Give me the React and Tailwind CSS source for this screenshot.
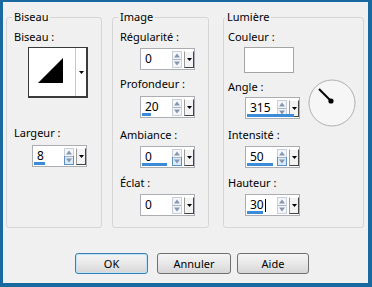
const SpinArrows = ({ hot }) => (
  <svg width="10" height="17" viewBox="0 0 10 17" className="shrink-0">
    <rect x="0.5" y="0.5" width="9" height="16" fill="#f4f6f9" stroke="#c9cfd8" />
    {hot && <rect x="0.5" y="8.5" width="9" height="8" fill="#dcebf9" stroke="#5b8fc7" />}
    <line x1="1" y1="8.5" x2="9" y2="8.5" stroke="#a9b3c2" />
    <polygon points="5,2.5 2,6.5 8,6.5" fill="#8596b0" />
    <polygon points="2,10.5 8,10.5 5,14.5" fill="#8596b0" />
  </svg>
);

const DropButton = () => (
  <div className="ml-[2px] flex h-[17px] w-[10px] shrink-0 items-center justify-center border border-t-white border-l-[#9a9a9a] border-r-[#444] border-b-[#444] bg-[#f3f3f3]">
    <svg width="5" height="3" viewBox="0 0 5 3">
      <polygon points="0,0 5,0 2.5,3" fill="#000" />
    </svg>
  </div>
);

const Spin = ({ value, bar = 0, hot = false, cursor = false, className = '' }) => (
  <div className={`relative flex h-[22px] w-[55px] items-center border border-[#abadb3] bg-white ${className}`}>
    <span className="ml-[4px] flex w-[28px] items-center text-[12px] leading-[14px]">
      {value}
      {cursor && <span className="ml-[1px] inline-block h-[13px] w-px bg-black" />}
    </span>
    <SpinArrows hot={hot} />
    <DropButton />
    {bar > 0 && (
      <div className="absolute bottom-[1px] left-[1px] h-[3px] bg-[#3c8bd8]" style={{ width: bar }} />
    )}
  </div>
);

const Group = ({ title, className = '', children }) => (
  <fieldset className={`h-[218px] shrink-0 rounded-[3px] border border-[#d6d6d6] ${className}`}>
    <legend className="px-[2px] leading-[14px]">{title}</legend>
    {children}
  </fieldset>
);

const BevelPreview = () => (
  <div className="ml-[14px] mt-[3px] flex h-[51px] w-[60px] border border-[#3a3a3a] border-r-2 border-b-2 bg-white">
    <svg width="46" height="48" viewBox="0 0 46 48" className="shrink-0">
      <polygon points="9,35 34,10 34,35" fill="#000" />
    </svg>
    <div className="flex flex-1 items-center justify-center border-l border-[#c8c8c8]">
      <svg width="5" height="3" viewBox="0 0 5 3">
        <polygon points="0,0 5,0 2.5,3" fill="#000" />
      </svg>
    </div>
  </div>
);

const Dial = () => (
  <svg width="48" height="48" viewBox="0 0 48 48" className="ml-[8px] mt-[55px] shrink-0">
    <circle cx="24" cy="24" r="23" fill="#f6f6f6" stroke="#b0b0b0" />
    <line x1="11" y1="10" x2="23" y2="22" stroke="#000" strokeWidth="2" />
    <circle cx="23" cy="22" r="2.6" fill="#000" />
  </svg>
);

const Button = ({ children, primary = false, className = '' }) => (
  <button
    className={`h-[21px] rounded-[3px] border bg-linear-to-b from-[#f4f4f4] via-[#e8e8e8] to-[#d6d6d6] text-[11px] leading-[14px] text-black ${
      primary ? 'border-[#3c7fb1] shadow-[inset_0_0_0_1px_#bfe2f5]' : 'border-[#707070]'
    } ${className}`}
  >
    {children}
  </button>
);

export default function App() {
  return (
    <div className="h-[287px] w-[372px] border-t-2 border-l-[3px] border-r-4 border-b-4 border-[#17699f] bg-[#f0f0f0] font-['Noto_Sans',sans-serif] text-[11px] leading-[14px] text-black">
      <div className="flex pl-[3px] pt-[8px]">
        <Group title="Biseau" className="w-[96px] pl-[5px]">
          <div className="pl-[2px]">
            <div className="mt-[6px]">Biseau :</div>
            <BevelPreview />
            <div className="mt-[28px]">Largeur :</div>
            <Spin value="8" bar={11} hot className="ml-[18px] mt-[5px]" />
          </div>
        </Group>

        <Group title="Image" className="ml-[10px] w-[97px] pl-[5px]">
          <div className="pl-[2px]">
            <div className="mt-[6px]">Régularité :</div>
            <Spin value="0" className="ml-[20px] mt-[4px]" />
            <div className="mt-[7px]">Profondeur :</div>
            <Spin value="20" bar={9} className="ml-[20px] mt-[5px]" />
            <div className="mt-[10px]">Ambiance :</div>
            <Spin value="0" bar={25} hot className="ml-[20px] mt-[4px]" />
            <div className="mt-[8px]">Éclat :</div>
            <Spin value="0" className="ml-[20px] mt-[4px]" />
          </div>
        </Group>

        <Group title="Lumière" className="ml-[14px] w-[141px] pl-[1px]">
          <div className="flex pl-[3px]">
            <div className="flex flex-col">
              <div className="mt-[6px]">Couleur :</div>
              <div className="ml-[16px] mt-[3px] h-[26px] w-[50px] border border-[#a5a5a5] bg-white" />
              <div className="mt-[7px]">Angle :</div>
              <Spin value="315" bar={47} className="ml-[17px] mt-[3px]" />
              <div className="mt-[9px]">Intensité :</div>
              <Spin value="50" bar={26} hot className="ml-[17px] mt-[4px]" />
              <div className="mt-[8px]">Hauteur :</div>
              <Spin value="30" bar={16} cursor className="ml-[17px] mt-[4px]" />
            </div>
            <Dial />
          </div>
        </Group>
      </div>

      <div className="mt-[25px] flex pl-[72px]">
        <Button primary className="w-[73px]">OK</Button>
        <Button className="ml-[9px] w-[74px]">Annuler</Button>
        <Button className="ml-[6px] w-[72px]">Aide</Button>
      </div>
    </div>
  );
}
